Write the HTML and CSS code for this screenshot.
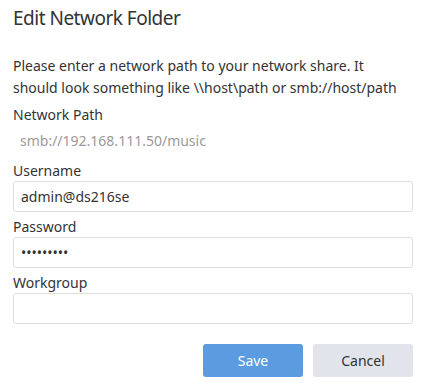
FILE: index.html
```html
<!DOCTYPE html>
<html lang="en">
<head>
    <meta charset="UTF-8">
    <title>Edit Network Folder</title>
    <link rel="stylesheet" href="styles.css">
</head>
<body>
    <div class="dialog">
        <h2>Edit Network Folder</h2>

        <p class="intro">Please enter a network path to your network share. It should look something like \\host\path or smb://host/path</p>

        <!-- Fields -->
        <div class="field">
            <label>Network Path</label>
            <div class="static-value">smb://192.168.111.50/music</div>
        </div>
        <div class="field">
            <label>Username</label>
            <input type="text" value="admin@ds216se">
        </div>
        <div class="field">
            <label>Password</label>
            <input type="password" value="password1">
        </div>
        <div class="field">
            <label>Workgroup</label>
            <input type="text" value="">
        </div>

        <!-- Buttons -->
        <div class="actions">
            <button class="save">Save</button>
            <button class="cancel">Cancel</button>
        </div>
    </div>
</body>
</html>
```

FILE: styles.css
```css
body {
    font-family: 'Noto Sans', 'Open Sans', sans-serif;
    background-color: #fff;
    color: #333;
    margin: 0;
}
.dialog {
    padding: 0 10px 0 13px;
}
.dialog h2 {
    font-size: 19px;
    font-weight: normal;
    letter-spacing: -0.5px;
    margin: 0;
    padding-top: 3px;
    line-height: 30px;
}
.intro {
    font-size: 14px;
    line-height: 22px;
    margin: 22px 0 6px 0;
    padding-right: 15px;
}
.field {
    display: flex;
    flex-direction: column;
    margin-bottom: 5px;
}
.field label {
    font-size: 14px;
    line-height: 20px;
}
.static-value {
    font-size: 14px;
    line-height: 31px;
    padding: 0 7px;
    color: #999;
}
.field input {
    font-family: inherit;
    font-size: 14px;
    color: #333;
    height: 31px;
    box-sizing: border-box;
    border: 1px solid #ddd;
    border-radius: 3px;
    padding: 0 7px;
    margin: 0;
    outline: none;
}
.actions {
    display: flex;
    justify-content: flex-end;
    gap: 10px;
    margin-top: 20px;
}
.actions button {
    font-family: inherit;
    font-size: 14px;
    width: 100px;
    height: 33px;
    border: none;
    border-radius: 3px;
    cursor: pointer;
}
.save {
    background: #5b9ce0;
    color: #fff;
}
.cancel {
    background: #e1e4ea;
    color: #333;
}
```
